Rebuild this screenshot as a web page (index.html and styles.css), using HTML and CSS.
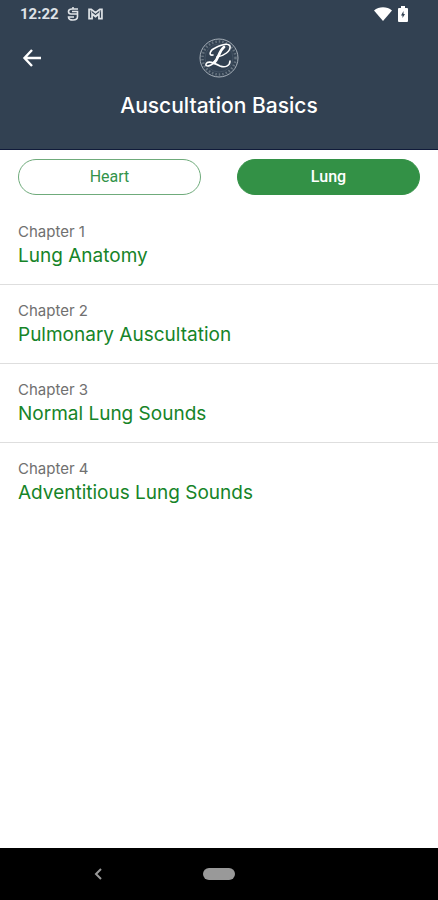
FILE: index.html
```
<!DOCTYPE html>
<html lang="en">
<head>
<meta charset="utf-8">
<meta name="viewport" content="width=device-width, initial-scale=1">
<title>Auscultation Basics</title>
<link rel="stylesheet" href="styles.css">
</head>
<body>
<header class="header">
  <div class="status">
    <div class="status-group">
      <time class="clock">12:22</time>
      <svg width="12" height="14" viewBox="0 0 12 14" fill="none" stroke="currentColor" stroke-width="1.600" aria-hidden="true"><path d="M11 2H5Q1.500 2 1.500 4.500Q1.500 7 4 7H10.500V9.500Q10.500 13 6 13Q1.500 13 1.500 10H7M10.500 7V4.500H5M6 0V2"/></svg>
      <svg width="17" height="12" viewBox="0 0 18 14" fill="none" stroke="currentColor" aria-hidden="true"><path stroke-width="2" d="M5 12.500H1.500V1.500H4L9 5.500L14 1.500H16.500V12.500H13V7L9 10L5 7Z"/><path stroke-width="1" d="M4 2V5L9 9L14 5V2"/></svg>
    </div>
    <div class="status-group status-right">
      <svg width="18" height="14" viewBox="0 0 18 14" fill="currentColor" aria-hidden="true"><path d="M0 3.500C5-.7 13-.7 18 3.500L9 14Z"/></svg>
      <svg width="10" height="16" viewBox="0 0 10 16" aria-hidden="true"><path fill="currentColor" d="M3 0H7V2H9Q10 2 10 3V15Q10 16 9 16H1Q0 16 0 15V3Q0 2 1 2H3Z"/><path fill="#324152" d="M5.500 5L3 9.500H4.500V12L7 8H5.500Z"/></svg>
    </div>
  </div>
  <div class="bar">
    <button class="back" type="button" aria-label="Back">
      <svg width="20" height="20" viewBox="0 0 20 20" fill="none" stroke="currentColor" stroke-width="2.400"><path d="M10 2L2.500 10L10 18M2.500 10H19"/></svg>
    </button>
    <svg class="logo" width="40" height="40" viewBox="0 0 40 40" fill="none" stroke="currentColor" role="img" aria-label="L logo">
      <circle cx="20" cy="20" r="19" stroke="#a9b2bb" stroke-width="1"/>
      <circle cx="20" cy="20" r="16.500" stroke="#66737f" stroke-width="2.500" stroke-dasharray="1.500 2"/>
      <circle cx="20" cy="20" r="14" fill="#324152" stroke="#506070" stroke-width=".6"/>
      <path stroke-width="1.600" stroke-linecap="round" d="M14 17C9 18 11 12 16 10C22 7 29 5 31 8C32 13 25 18 18 19M16 23C12 29 6 29 7 26C9 22 15 25 21 28C26 30 31 28 31 23"/>
      <path stroke-width="2.800" stroke-linecap="round" d="M25 9C20 13 20 20 15 25"/>
    </svg>
  </div>
  <h1 class="title">Auscultation Basics</h1>
</header>
<main class="content">
  <div class="tabs" role="tablist">
    <button class="tab" type="button" role="tab" aria-selected="false">Heart</button>
    <button class="tab tab-active" type="button" role="tab" aria-selected="true">Lung</button>
  </div>
  <nav class="chapters" aria-label="Chapters">
    <a class="chapter" href="#1"><span class="number">Chapter 1</span><span class="name">Lung Anatomy</span></a>
    <a class="chapter" href="#2"><span class="number">Chapter 2</span><span class="name">Pulmonary Auscultation</span></a>
    <a class="chapter" href="#3"><span class="number">Chapter 3</span><span class="name">Normal Lung Sounds</span></a>
    <a class="chapter" href="#4"><span class="number">Chapter 4</span><span class="name">Adventitious Lung Sounds</span></a>
  </nav>
</main>
<footer class="system">
  <button class="system-back" type="button" aria-label="System back">
    <svg width="8" height="12" viewBox="0 0 8 12" fill="none" stroke="currentColor" stroke-width="2"><path d="M7 1L2 6L7 11"/></svg>
  </button>
  <button class="home" type="button" aria-label="Home"></button>
</footer>
</body>
</html>
```
FILE: styles.css
```
* { box-sizing: border-box; }
body {
  margin: 0;
  min-height: 100vh;
  display: flex;
  flex-direction: column;
  background: #fff;
  font-family: Inter, "Liberation Sans", sans-serif;
}
button {
  border: 0;
  padding: 0;
  background: none;
  color: inherit;
  font: inherit;
}
svg { display: block; }
.header {
  background: #324152;
  color: #fff;
  padding-bottom: 30px;
  border-bottom: 1px solid #101a3a;
}
.status {
  display: flex;
  justify-content: space-between;
  align-items: center;
  height: 28px;
  padding: 0 30px 0 20px;
}
.status-group {
  display: flex;
  align-items: center;
  gap: 8px;
  color: #dfe3e7;
}
.status-right { gap: 6px; color: #fff; }
.clock {
  font: 700 15px/20px Roboto, sans-serif;
}
.bar {
  display: grid;
  grid-template-columns: 1fr auto 1fr;
  align-items: center;
  padding: 10px 22px 0;
}
.back { justify-self: start; }
.logo { grid-column: 2; }
.title {
  margin: 15px 0 0;
  text-align: center;
  font-size: 21px;
  line-height: 26px;
  font-weight: 500;
}
.content { flex: 1; }
.tabs {
  display: grid;
  grid-template-columns: 1fr 1fr;
  gap: 36px;
  padding: 9px 18px 11px;
}
.tab {
  height: 36px;
  border: 1px solid #6fab7b;
  border-radius: 18px;
  color: #32934a;
  font: 400 16px/20px Roboto, sans-serif;
}
.tab-active {
  background: #339146;
  border-color: #339146;
  color: #fff;
  font-weight: 500;
}
.chapter {
  display: flex;
  flex-direction: column;
  padding: 17px 18px 13px;
  border-bottom: 1px solid #dedede;
  text-decoration: none;
}
.chapter:last-child { border-bottom: 0; }
.number {
  color: #707070;
  font-size: 15px;
  line-height: 18px;
}
.name {
  color: #168428;
  font-size: 19px;
  line-height: 30px;
}
.system {
  display: grid;
  grid-template-columns: 1fr auto 1fr;
  align-items: center;
  height: 52px;
  background: #000;
  color: #999;
}
.system-back { justify-self: center; margin-right: 8px; }
.home {
  width: 32px;
  height: 12px;
  border-radius: 6px;
  background: #999;
}
```
